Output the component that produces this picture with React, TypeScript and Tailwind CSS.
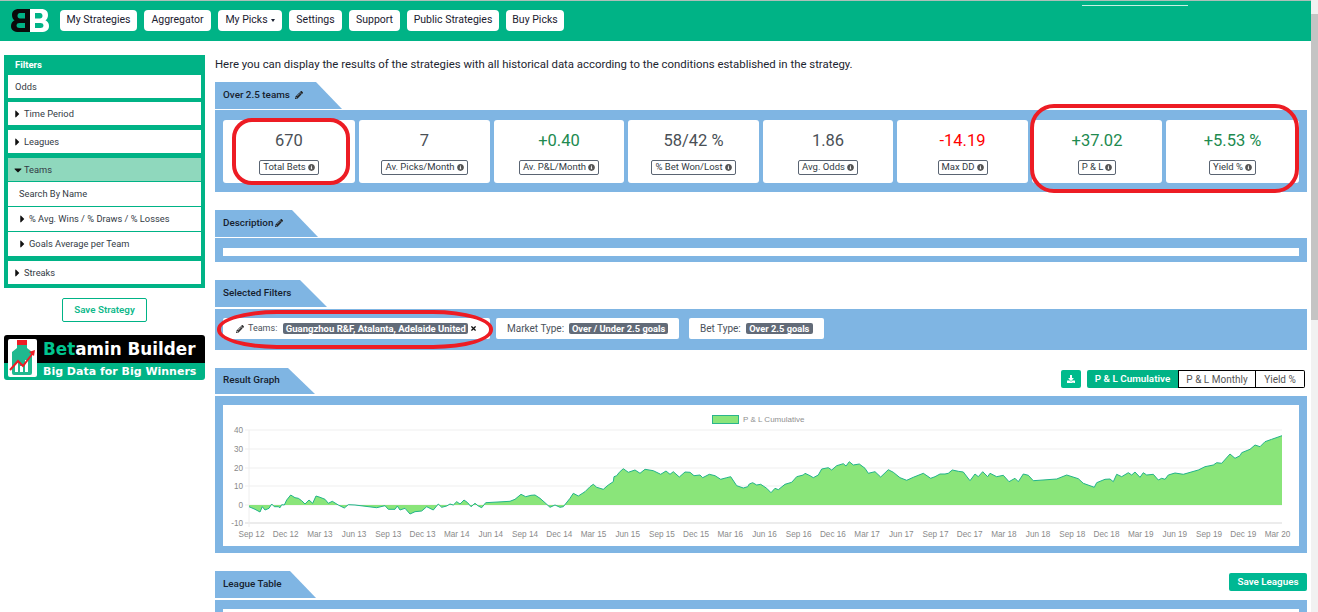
import React from "react";
import { FaCaretRight, FaCaretDown, FaPencilAlt, FaInfoCircle, FaDownload, FaTimes } from "react-icons/fa";

const seg1: number[][] = [[12,140],[30,148],[45,156],[52,140],[60,150],[72,145],[80,132],[88,140],[100,140],[105,143],[110,134],[118,135],[125,120],[137,105],[150,113],[160,115],[170,122],[180,132],[192,120],[203,130],[213,108],[225,112],[240,118],[250,130],[262,124],[280,135],[298,144],[310,134],[330,135],[395,143],[420,137],[430,148],[450,148],[457,138],[465,150],[480,145],[495,162],[510,155],[530,153],[545,140],[565,150],[580,132],[590,142],[605,138],[615,132],[625,135],[635,125],[645,132],[657,120],[668,128],[678,140],[690,130],[700,138],[710,143],[722,128],[795,124],[810,118],[828,103],[842,110],[858,106],[870,105],[885,115],[900,128],[915,142],[930,135],[945,142],[955,140],[975,115],[985,100],[1000,108],[1020,95],[1035,80]];
const seg2: number[][] = [[0,95],[10,88],[20,97],[40,103],[55,90],[70,80],[72,65],[80,62],[88,52],[100,41],[115,52],[135,45],[150,55],[165,43],[190,47],[212,58],[228,48],[240,58],[250,50],[268,66],[285,51],[300,52],[312,62],[330,60],[338,68],[358,58],[375,62],[392,73],[410,68],[422,65],[440,92],[460,99],[473,95],[478,87],[488,83],[500,90],[512,88],[530,100],[543,113],[555,100],[565,104],[585,88],[605,82],[620,65],[640,60],[645,55],[660,62],[670,68],[685,60],[695,42],[715,38],[725,45],[740,32],[760,26],[768,33],[778,20],[790,30],[808,27],[825,40],[835,55],[855,50],[872,66],[895,44],[910,52],[930,68],[950,76],[970,67],[1000,55],[1022,70],[1035,65]];
const seg3: number[][] = [[0,140],[15,132],[30,132],[40,130],[52,120],[70,124],[85,126],[105,152],[120,132],[130,140],[143,125],[158,140],[165,130],[185,140],[205,136],[222,155],[240,145],[250,155],[265,132],[280,136],[295,152],[365,147],[395,135],[430,146],[445,160],[478,172],[485,158],[510,148],[525,147],[535,155],[545,133],[560,140],[580,128],[590,135],[600,126],[615,142],[625,128],[635,135],[655,133],[670,150],[680,145],[690,148],[700,135],[720,129],[745,133],[790,120],[810,110],[835,105],[845,98],[860,100],[885,72],[900,85],[915,77],[920,68],[945,58],[960,45],[975,50],[990,35],[1010,28],[1041,17]];

const pts: number[][] = [
  ...seg1.map(([x, y]) => [245 + x / 3, 460 + y / 3]),
  ...seg2.map(([x, y]) => [590 + x / 3, 455 + y / 3]),
  ...seg3.map(([x, y]) => [935 + x / 3, 430 + y / 3]),
];
const line = pts.map(([x, y]) => `${x.toFixed(1)},${y.toFixed(1)}`).join(" ");
const area = `249,505 ${line} 1282,505`;

const months = ["Sep 12","Dec 12","Mar 13","Jun 13","Sep 13","Dec 13","Mar 14","Jun 14","Sep 14","Dec 14","Mar 15","Jun 15","Sep 15","Dec 15","Mar 16","Jun 16","Sep 16","Dec 16","Mar 17","Jun 17","Sep 17","Dec 17","Mar 18","Jun 18","Sep 18","Dec 18","Mar 19","Jun 19","Sep 19","Dec 19","Mar 20"];
const yTicks: [string, number][] = [["40",430],["30",449],["20",468],["10",486],["0",505],["-10",523]];

function Chart() {
  return (
    <svg viewBox="223 405 1076 141" className="block w-full h-[141px]" fontFamily="'Liberation Sans', Arial, sans-serif">
      <rect x="712.5" y="415.5" width="26" height="8" fill="#8ae57a" stroke="#2ab58c" strokeWidth="1" />
      <text x="743" y="422" fontSize="8" fill="#909090">P &amp; L Cumulative</text>
      {yTicks.map(([t, y]) => (
        <g key={t}>
          <line x1="245" x2="1282" y1={y} y2={y} stroke={t === "-10" ? "#ececec" : "#efefef"} strokeWidth={t === "-10" ? 2 : 1} />
          <text x="243" y={y + 2.8} fontSize="8.2" fill="#8a8a8a" textAnchor="end">{t}</text>
        </g>
      ))}
      <line x1="249" x2="249" y1="430" y2="527" stroke="#eeeeee" />
      {months.map((m, i) => (
        <text key={m} x={251.5 + i * 34.2} y="537" fontSize="8.2" fill="#8a8a8a" textAnchor="middle">{m}</text>
      ))}
      <polygon points={area} fill="#8ae57a" />
      <polyline points={line} fill="none" stroke="#22b48a" strokeWidth="1" />
    </svg>
  );
}

function Logo() {
  return (
    <svg viewBox="0 0 38 23" className="w-[38px] h-[23px]">
      <path fillRule="evenodd" fill="#0a0a0a" d="M19 0H8C3 0 1 2.500 1 6c0 2.500 1 4.300 2.500 5.300C1.500 12.300 0 14.200 0 17c0 4 3 6 8 6h11V0ZM14 4v5.500H9C7.500 9.500 6.500 8.500 6.500 6.800S7.500 4 9 4h5Zm0 10v5H8.500C6.800 19 5.500 18.200 5.500 16.500S6.800 14 8.500 14H14Z" />
      <path fillRule="evenodd" fill="#ffffff" d="M19 0h11c5 0 7 2.500 7 6 0 2.500-1 4.300-2.500 5.300C36.500 12.300 38 14.200 38 17c0 4-3 6-8 6H19V0Zm5 4v5.500h5c1.500 0 2.500-1 2.500-2.700S30.500 4 29 4h-5Zm0 10v5h5.500c1.700 0 3-.8 3-2.500S31.200 14 29.500 14H24Z" />
    </svg>
  );
}

function NavBtn({ w, children }: { w: string; children: React.ReactNode }) {
  return (
    <button className={`${w} h-[21px] bg-white rounded-[4px] text-[10.500px] leading-none text-[#1a2030] flex items-center justify-center whitespace-nowrap`}>
      {children}
    </button>
  );
}

const rowText = "text-[9.300px] text-[#333b45]";

function Row({ label, caret }: { label: string; caret?: boolean }) {
  return (
    <div className={`bg-white flex items-center ${rowText} pl-[7px] h-[23px]`}>
      {caret && <FaCaretRight className="w-[5px] h-[12px] mr-[4px] text-[#111] shrink-0" />}
      <span>{label}</span>
    </div>
  );
}

function Sidebar() {
  return (
    <aside className="w-[201px] shrink-0">
      <div className="bg-[#00b386] px-[4px] pb-[4px]">
        <div className="h-[20px] flex items-center pl-[7px] text-[9.500px] font-bold text-white">Filters</div>
        <div className="flex flex-col gap-[4px]">
          <Row label="Odds" />
          <Row label="Time Period" caret />
          <div className="mt-px"><Row label="Leagues" caret /></div>
          <div className="mt-px flex flex-col">
            <div className={`h-[24px] bg-[#8fd8bd] border-b border-[#00b386] pl-[6px] flex items-center ${rowText}`}>
              <FaCaretDown className="w-[8px] h-[12px] mr-[2px] text-[#111]" />
              <span>Teams</span>
            </div>
            <div className={`bg-white h-[25px] pl-[11px] flex items-center ${rowText} border-b border-[#00b386]`}>Search By Name</div>
            <div className={`bg-white h-[25px] pl-[12px] flex items-center ${rowText} border-b border-[#00b386]`}>
              <FaCaretRight className="w-[5px] h-[12px] mr-[4px] text-[#111]" />
              <span>% Avg. Wins / % Draws / % Losses</span>
            </div>
            <div className={`bg-white h-[24px] pl-[12px] flex items-center ${rowText}`}>
              <FaCaretRight className="w-[5px] h-[12px] mr-[4px] text-[#111]" />
              <span>Goals Average per Team</span>
            </div>
          </div>
          <div className="mt-px"><Row label="Streaks" caret /></div>
        </div>
      </div>
      <div className="flex justify-center mt-[10px]">
        <button className="w-[85px] h-[24px] border border-[#00b386] rounded-[2px] text-[9.800px] font-semibold text-[#10b98c] bg-white">Save Strategy</button>
      </div>
      <div className="mt-[13px] h-[45px] rounded-[3px] overflow-hidden relative flex flex-col">
        <div className="h-[28px] bg-black pl-[39px] flex items-center text-[16.800px] font-bold leading-none font-['DejaVu_Sans',sans-serif] text-white whitespace-nowrap">
          <span className="text-[#00c48f]">Bet</span>amin Builder
        </div>
        <div className="flex-1 bg-[#00b386] pl-[39px] flex items-center text-[11px] font-bold leading-none font-['DejaVu_Sans',sans-serif] text-white whitespace-nowrap">Big Data for Big Winners</div>
        <svg viewBox="0 0 29 38" className="absolute left-[4px] top-[4px] w-[29px] h-[38px]">
          <rect width="29" height="38" rx="2" fill="#fff" />
          <rect x="9" y="1" width="10" height="5" fill="#ee1c24" />
          <path d="M9 6h10v3l5 4v21a2 2 0 0 1-2 2H6a2 2 0 0 1-2-2V13l5-4Z" fill="#1fb98f" />
          <path d="M7 33V24h3v9Zm5 0v-6h3v6Zm5 0V21h3v12Z" fill="#fff" />
          <path d="M2 31l8-9 5 5 10-13" fill="none" stroke="#ee1c24" strokeWidth="2" />
          <path d="M27 11l-6 2 5 4Z" fill="#ee1c24" />
        </svg>
      </div>
    </aside>
  );
}

function Tab({ label, shape, h = "h-[27px]", children }: { label: React.ReactNode; shape: string; h?: string; children?: React.ReactNode }) {
  return (
    <div className={`${shape} ${h} bg-[#7fb5e3] pl-[8px] pb-[1px] flex items-center text-[9.900px] font-medium text-[#16212e] gap-[4px]`}>
      {label}
      {children}
    </div>
  );
}

function Metric({ value, label, color = "text-[#4a5056]" }: { value: string; label: string; color?: string }) {
  return (
    <div className="h-[63px] bg-white rounded-[3px] flex flex-col items-center pt-[11px]">
      <div className={`text-[16.500px] leading-[20px] ${color}`}>{value}</div>
      <div className="mt-[9px] h-[15px] px-[3px] border border-[#5a6472] rounded-[2px] flex items-center gap-[2px] text-[9.500px] text-[#333b45] whitespace-nowrap">
        {label}
        <FaInfoCircle className="w-[7px] h-[7px] text-[#555]" />
      </div>
    </div>
  );
}

function Main() {
  return (
    <main className="w-[1092px] ml-[10px] shrink-0 relative">
      <div className="h-[41px] pt-[16px] text-[11.380px] leading-[14px] text-[#1c2530] whitespace-nowrap">
        Here you can display the results of the strategies with all historical data according to the conditions established in the strategy.
      </div>

      <Tab shape="w-[127px] [clip-path:polygon(0_0,101px_0,100%_100%,0_100%)]" label="Over 2.5 teams">
        <FaPencilAlt className="w-[8px] h-[8px] ml-[1px] text-[#222]" />
      </Tab>
      <div className="mt-px h-[82px] bg-[#7fb5e3] px-[8px] pt-[10px] grid grid-cols-[132px_131px_130px_131px_130px_131px_130px_133px] gap-[4px] relative">
        <Metric value="670" label="Total Bets" />
        <Metric value="7" label="Av. Picks/Month" />
        <Metric value="+0.40" label="Av. P&L/Month" color="text-[#218a4f]" />
        <Metric value="58/42 %" label="% Bet Won/Lost" />
        <Metric value="1.86" label="Avg. Odds" />
        <Metric value="-14.19" label="Max DD" color="text-[#ff0000]" />
        <Metric value="+37.02" label="P & L" color="text-[#218a4f]" />
        <Metric value="+5.53 %" label="Yield %" color="text-[#218a4f]" />
        <div className="absolute left-[17px] top-[8px] w-[118px] h-[67px] border-[4px] border-[#ed1c24] rounded-[20px]" />
        <div className="absolute left-[815px] top-[-6px] w-[269px] h-[89px] border-[4px] border-[#ed1c24] rounded-[24px]" />
      </div>

      <div className="mt-[18px]">
        <Tab shape="w-[103px] [clip-path:polygon(0_0,77px_0,100%_100%,0_100%)]" label="Description">
          <FaPencilAlt className="w-[8px] h-[8px] -ml-[2px] text-[#222]" />
        </Tab>
      </div>
      <div className="mt-px h-[24px] bg-[#7fb5e3] px-[8px] pt-[10px]">
        <div className="h-[8px] bg-white" />
      </div>

      <div className="mt-[18px]">
        <Tab shape="w-[112px] [clip-path:polygon(0_0,85px_0,100%_100%,0_100%)]" label="Selected Filters" />
      </div>
      <div className="mt-[2px] h-[41px] bg-[#7fb5e3] pl-[8px] pt-[9px] flex gap-[6px] items-start relative text-[10px] text-[#4a525c]">
        <div className="w-[267px] h-[21px] bg-white rounded-[2px] pl-[13px] flex items-center">
          <FaPencilAlt className="w-[8px] h-[8px] mr-[4px] text-[#333]" />
          <span className="text-[9px]">Teams:</span>
          <span className="w-[185px] h-[11px] ml-[6px] rounded-[2px] bg-[#626b78] text-white font-bold text-[9.500px] leading-[11px] text-center whitespace-nowrap">Guangzhou R&amp;F, Atalanta, Adelaide United</span>
          <FaTimes className="w-[7px] h-[7px] ml-[2px] text-[#111]" />
        </div>
        <div className="w-[183px] h-[21px] bg-white rounded-[2px] pl-[11px] flex items-center">
          Market Type:
          <span className="w-[99px] h-[11px] ml-[5px] rounded-[2px] bg-[#626b78] text-white font-bold text-[9.300px] leading-[11px] text-center whitespace-nowrap">Over / Under 2.5 goals</span>
        </div>
        <div className="ml-[4px] w-[135px] h-[21px] bg-white rounded-[2px] pl-[11px] flex items-center">
          Bet Type:
          <span className="w-[67px] h-[11px] ml-[5px] rounded-[2px] bg-[#626b78] text-white font-bold text-[9.300px] leading-[11px] text-center whitespace-nowrap">Over 2.5 goals</span>
        </div>
        <div className="absolute left-[2px] top-[1px] w-[276px] h-[39px] border-[4px] border-[#ed1c24] rounded-[60px/19px]" />
      </div>

      <div className="mt-[18px] flex justify-between items-start">
        <Tab shape="w-[100px] [clip-path:polygon(0_0,73px_0,100%_100%,0_100%)]" h="h-[26px]" label="Result Graph" />
        <div className="flex mt-[2px] mr-[2px]">
          <button className="w-[20px] h-[18px] bg-[#00bb8c] rounded-[2px] mr-[6px] flex items-center justify-center">
            <FaDownload className="w-[8px] h-[8px] text-white" />
          </button>
          <button className="w-[91px] h-[18px] bg-[#00b386] text-white font-semibold text-[9.900px] rounded-l-[2px]">P &amp; L Cumulative</button>
          <button className="w-[78px] h-[18px] border border-black bg-white text-[#555] text-[10px]">P &amp; L Monthly</button>
          <button className="w-[49px] h-[18px] border border-black border-l-0 bg-white text-[#555] text-[10px] rounded-r-[2px]">Yield %</button>
        </div>
      </div>
      <div className="mt-[2px] h-[157px] bg-[#7fb5e3] px-[8px] pt-[9px]">
        <div className="bg-white h-[141px]"><Chart /></div>
      </div>

      <div className="mt-[18px] flex justify-between items-start">
        <Tab shape="w-[101px] [clip-path:polygon(0_0,75px_0,100%_100%,0_100%)]" label="League Table" />
        <button className="mt-[2px] w-[78px] h-[18px] bg-[#00b893] rounded-[2px] text-white text-[9.800px] font-semibold">Save Leagues</button>
      </div>
      <div className="mt-[2px] h-[60px] bg-[#7fb5e3] px-[8px] pt-[9px]">
        <div className="bg-white h-[60px]" />
      </div>
    </main>
  );
}

export default function App() {
  return (
    <div className="w-[1318px] h-[612px] overflow-hidden flex bg-white font-['Roboto',sans-serif]">
      <div className="w-[1311px] shrink-0 relative">
        <header className="h-[41px] bg-[#00b386] border-t border-[#aebfb9] flex items-start pl-[11px] pt-[8px]">
          <Logo />
          <nav className="flex gap-[7px] ml-[11px] mt-px">
            <NavBtn w="w-[77px]">My Strategies</NavBtn>
            <NavBtn w="w-[67px]">Aggregator</NavBtn>
            <NavBtn w="w-[64px]">
              My Picks
              <span className="ml-[3px] border-x-[2.500px] border-x-transparent border-t-[3px] border-t-[#1a2030]" />
            </NavBtn>
            <NavBtn w="w-[53px]">Settings</NavBtn>
            <NavBtn w="w-[51px]">Support</NavBtn>
            <NavBtn w="w-[92px]">Public Strategies</NavBtn>
            <NavBtn w="w-[58px]">Buy Picks</NavBtn>
          </nav>
          <div className="absolute left-[1082px] top-[5px] w-[106px] h-px bg-[#c8f0e2]" />
        </header>
        <div className="flex">
          <div className="pl-[4px] pt-[14px]"><Sidebar /></div>
          <Main />
        </div>
      </div>
      <div className="w-[7px] bg-[#f1f1f1] flex flex-col">
        <div className="h-[14px]" />
        <div className="h-[306px] bg-[#c4c4c4]" />
      </div>
    </div>
  );
}
